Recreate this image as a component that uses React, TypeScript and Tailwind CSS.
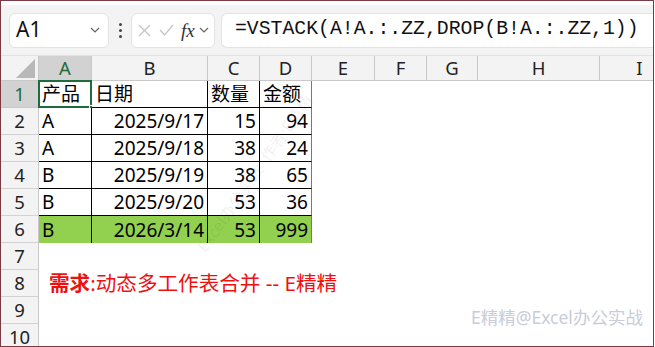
import React from "react";

const cols = [
  { k: "A", w: 53 },
  { k: "B", w: 116 },
  { k: "C", w: 52 },
  { k: "D", w: 52 },
  { k: "E", w: 63 },
  { k: "F", w: 52 },
  { k: "G", w: 51 },
  { k: "H", w: 122 },
  { k: "I", w: 80 },
];

const data: string[][] = [
  ["产品", "日期", "数量", "金额"],
  ["A", "2025/9/17", "15", "94"],
  ["A", "2025/9/18", "38", "24"],
  ["B", "2025/9/19", "38", "65"],
  ["B", "2025/9/20", "53", "36"],
  ["B", "2026/3/14", "53", "999"],
];

const cellFont = { fontFamily: '"Noto Sans", "Noto Sans CJK SC", sans-serif' };

function Chevron() {
  return (
    <svg width="10" height="6" viewBox="0 0 10 6" fill="none">
      <path d="M1 1l4 4 4-4" stroke="#666" strokeWidth="1.2" />
    </svg>
  );
}

export default function App() {
  return (
    <div
      className="w-[654px] h-[347px] overflow-hidden bg-white border border-[#7a3a44] relative"
      style={cellFont}
    >
      <div className="h-[4px] bg-white" />
      {/* formula bar */}
      <div className="h-[51px] bg-[#f3f3f3] flex items-center pl-[8px] border-b border-[#e2e2e2]">
        <div className="w-[100px] h-[35px] bg-white rounded-[6px] border border-[#e3e3e3] flex items-center pl-[6px] pr-[8px] justify-between">
          <span className="text-[21px] text-[#111]">A1</span>
          <Chevron />
        </div>
        <div className="w-[22px] flex flex-col items-center gap-[3px]">
          <div className="w-[3px] h-[3px] rounded-full bg-[#444]" />
          <div className="w-[3px] h-[3px] rounded-full bg-[#444]" />
          <div className="w-[3px] h-[3px] rounded-full bg-[#444]" />
        </div>
        <div className="w-[84px] h-[35px] bg-white rounded-[6px] border border-[#e3e3e3] flex items-center pl-[6px] gap-[8px]">
          <svg width="13" height="13" viewBox="0 0 13 13">
            <path d="M1 1l11 11M12 1L1 12" stroke="#c4c4c4" strokeWidth="1.2" />
          </svg>
          <svg width="15" height="12" viewBox="0 0 15 12">
            <path d="M1 6l4.5 5L14 1" stroke="#c4c4c4" strokeWidth="1.2" fill="none" />
          </svg>
          <span
            className="text-[19px] italic text-[#333] leading-none -ml-[1px]"
            style={{ fontFamily: '"Liberation Serif", serif' }}
          >
            fx
          </span>
          <div className="-ml-[4px]">
            <Chevron />
          </div>
        </div>
        <div className="ml-[6px] flex-1 h-[35px] bg-white rounded-l-[6px] border border-r-0 border-[#e3e3e3] flex items-center pl-[13px]">
          <span
            className="text-[19.8px] text-[#111] whitespace-nowrap"
            style={{ fontFamily: '"Liberation Mono", monospace' }}
          >
            =VSTACK(A!A.:.ZZ,DROP(B!A.:.ZZ,1))
          </span>
        </div>
      </div>

      {/* column headers */}
      <div className="flex h-[25px] bg-[#f3f3f3] border-b border-[#c8c8c8]">
        <div className="w-[38px] shrink-0 relative border-r border-[#c8c8c8]">
          <svg className="absolute right-[3px] bottom-[2px]" width="19" height="19" viewBox="0 0 19 19">
            <path d="M19 0V19H0Z" fill="#b8b8b8" />
          </svg>
        </div>
        {cols.map((c) => (
          <div
            key={c.k}
            className={
              c.k === "A"
                ? "shrink-0 flex items-center justify-center text-[18.5px] border-r border-[#c8c8c8] bg-[#d2d2d2] text-[#1e6b3c]"
                : "shrink-0 flex items-center justify-center text-[18.5px] border-r border-[#c8c8c8] text-[#222]"
            }
            style={{ width: c.w }}
          >
            {c.k}
          </div>
        ))}
      </div>

      {/* rows */}
      {Array.from({ length: 10 }).map((_, r) => {
        const row = data[r];
        const green = r === 5;
        return (
          <div key={r} className="flex h-[27px]">
            <div
              className={
                r === 0
                  ? "w-[38px] shrink-0 flex items-center justify-center text-[18.5px] bg-[#d2d2d2] text-[#1e6b3c] border-r border-[#c8c8c8] border-b"
                  : "w-[38px] shrink-0 flex items-center justify-center text-[18.5px] bg-[#f3f3f3] text-[#222] border-r border-[#c8c8c8] border-b border-b-[#d2d2d2]"
              }
            >
              {r + 1}
            </div>
            {row ? (
              <>
                {row.map((v, ci) => {
                  const right = r > 0 && ci > 0;
                  const isD = ci === 3;
                  let cls =
                    "shrink-0 flex items-end pb-[1px] text-[19px] text-black leading-[24px] whitespace-nowrap relative ";
                  cls += right ? "justify-end pr-[3px] " : "justify-start pl-[3px] ";
                  cls += green ? "bg-[#92d050] " : "bg-white border-b border-b-black ";
                  cls += isD ? "border-r border-r-[#4a7fd0] " : "border-r border-r-black ";
                  return (
                    <div key={ci} className={cls} style={{ width: cols[ci].w }}>
                      {v}
                      {r === 0 && ci === 0 && (
                        <>
                          <div className="absolute -left-[1px] -top-[1px] w-[54px] h-[28px] border-2 border-[#1e6b3c]" />
                          <div className="absolute -right-[4px] -bottom-[4px] w-[6px] h-[6px] bg-[#1e6b3c] border border-white" />
                        </>
                      )}
                    </div>
                  );
                })}
              </>
            ) : r === 7 ? (
              <div className="flex items-center pl-[10px] text-[20.6px] text-[#ee1111] whitespace-nowrap">
                <span className="font-bold">需求</span>
                <span>:动态多工作表合并 -- E精精</span>
              </div>
            ) : null}
          </div>
        );
      })}

      {/* diagonal watermark */}
      <div
        className="absolute left-[160px] top-[160px] text-[16px] text-[#000000]/[0.07] whitespace-nowrap pointer-events-none"
        style={{ transform: "rotate(-55deg)", transformOrigin: "center" }}
      >
        Excel办公实战&nbsp;&nbsp;作者:E精精
      </div>

      {/* bottom-right watermark */}
      <div className="absolute left-[470px] top-[303px] text-[17.5px] text-[#c9ccd9] whitespace-nowrap">
        E精精@Excel办公实战
      </div>
    </div>
  );
}
